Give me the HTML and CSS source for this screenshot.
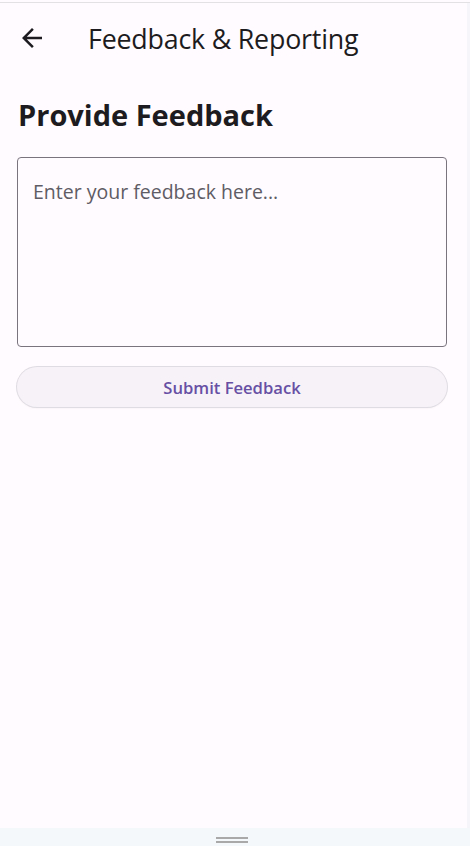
FILE: index.html
```html
<!DOCTYPE html>
<html>
<head>
<meta charset="utf-8">
<link rel="stylesheet" href="styles.css">
</head>
<body>
<div class="screen">
  <div class="frame">
    <div class="app">
      <header class="appbar">
        <button class="back" aria-label="Back">
          <svg width="30" height="30" viewBox="0 0 24 24"><path d="M20 11H7.830l5.590-5.590L12 4l-8 8 8 8 1.410-1.410L7.830 13H20v-2z" fill="#1d1b20"/></svg>
        </button>
        <h1 class="title">Feedback &amp; Reporting</h1>
      </header>
      <main class="content">
        <h2 class="heading">Provide Feedback</h2>
        <div class="field">
          <span class="placeholder">Enter your feedback here...</span>
        </div>
        <button class="submit">Submit Feedback</button>
      </main>
    </div>
    <div class="edge"></div>
  </div>
  <footer class="navbar">
    <div class="handle"></div>
  </footer>
</div>
</body>
</html>
```

FILE: styles.css
```css
* { box-sizing: border-box; }
html, body { margin: 0; padding: 0; }
body {
  width: 470px;
  height: 846px;
  background: #fffbfe;
  font-family: "Open Sans", "Noto Sans", sans-serif;
  color: #1d1b20;
  overflow: hidden;
}
.screen {
  height: 846px;
  display: flex;
  flex-direction: column;
  padding-top: 2px;
  background: #fffbfe;
}
.frame {
  flex: 1;
  display: flex;
  border-top: 1px solid #e3e1e4;
}
.app {
  flex: 1;
  display: flex;
  flex-direction: column;
  background: #fffbfe;
}
.edge {
  width: 4px;
  background: #f6f6fa;
}
.appbar {
  height: 72px;
  display: flex;
  align-items: center;
  padding: 0 0 2px 17px;
  gap: 41px;
}
.back {
  border: 0;
  background: none;
  padding: 0;
  width: 30px;
  height: 30px;
  display: flex;
}
.title {
  margin: 0;
  font-size: 26.8px;
  font-weight: 400;
  letter-spacing: -0.2px;
  color: #1d1b20;
}
.content {
  padding: 20px 20px 0 17px;
  display: flex;
  flex-direction: column;
}
.heading {
  margin: 0 0 22px 1px;
  font-size: 29px;
  font-weight: 700;
  line-height: 40px;
  color: #1d1b20;
}
.field {
  height: 190px;
  border: 1px solid #79747e;
  border-radius: 4px;
  padding: 19px 15px;
}
.placeholder {
  font-size: 19.5px;
  color: #605c65;
  line-height: 30px;
}
.submit {
  margin-top: 20px;
  height: 40px;
  width: 430px;
  border: 0;
  border-radius: 20px;
  background: #f6f2f8;
  box-shadow: 0 0 0 1px #e0dce3, 0 1px 2px rgba(0,0,0,0.08);
  color: #6750a4;
  font-family: "Open Sans", "Noto Sans", sans-serif;
  font-size: 16.6px;
  font-weight: 600;
}
.navbar {
  height: 18px;
  background: #f5f8fb;
  display: flex;
  justify-content: center;
  padding: 9px 6px 0 0;
}
.handle {
  width: 32px;
  height: 6px;
  border-top: 2px solid #a9a9a9;
  border-bottom: 2px solid #a9a9a9;
}
```
